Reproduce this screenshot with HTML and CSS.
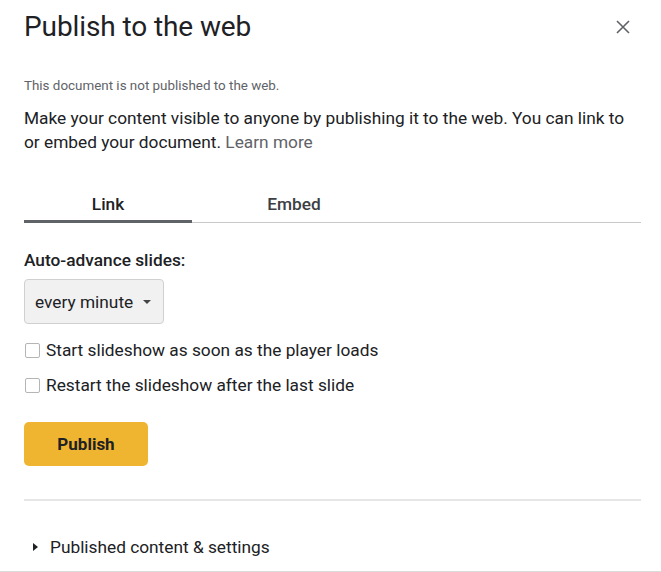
FILE: index.html
```html
<!DOCTYPE html>
<html>
<head>
<meta charset="utf-8">
<link rel="stylesheet" href="styles.css">
</head>
<body>
<div class="dialog">
  <header class="head">
    <h1 class="title">Publish to the web</h1>
    <svg class="close" width="14" height="14" viewBox="0 0 14 14"><path d="M1 1L13 13M13 1L1 13" stroke="#5f6368" stroke-width="1.6" fill="none"/></svg>
  </header>
  <p class="status">This document is not published to the web.</p>
  <p class="desc">Make your content visible to anyone by publishing it to the web. You can link to or embed your document. <span class="learn">Learn more</span></p>
  <nav class="tabs">
    <div class="tab active">Link</div>
    <div class="tab">Embed</div>
  </nav>
  <div class="label">Auto-advance slides:</div>
  <div class="select">every minute <span class="caret"></span></div>
  <label class="check first"><span class="box"></span>Start slideshow as soon as the player loads</label>
  <label class="check"><span class="box"></span>Restart the slideshow after the last slide</label>
  <button class="publish">Publish</button>
  <hr class="sep">
  <div class="expander"><span class="tri"></span>Published content &amp; settings</div>
</div>
<div class="bottom"></div>
</body>
</html>
```
FILE: styles.css
```css
html, body { margin: 0; padding: 0; background: #fff; }
body { font-family: Roboto, "Noto Sans", Arial, sans-serif; color: #202124; height: 572px; position: relative; overflow: hidden; }
.dialog { padding: 0 20px 0 24px; }
.head { display: flex; justify-content: space-between; align-items: center; height: 54px; }
.title { margin: 0; font-size: 28px; font-weight: 400; line-height: 32px; letter-spacing: -0.1px; }
.close { margin-right: 11px; }
.status { margin: 24px 0 0; font-size: 13.4px; line-height: 16px; color: #5f6368; }
.desc { margin: 12px 0 0; font-size: 17.3px; line-height: 24px; color: #202124; }
.learn { color: #5f6368; }
.tabs { display: flex; align-items: flex-start; margin-top: 38px; border-bottom: 1px solid #c8c8c8; height: 30px; }
.tab { font-size: 17.3px; font-weight: 500; line-height: 24px; color: #3c4043; text-align: center; }
.tab:first-child { width: 168px; }
.tab:nth-child(2) { width: 204px; }
.tab.active { color: #202124; height: 31px; box-sizing: border-box; border-bottom: 3px solid #5f6368; }
.label { margin-top: 25px; font-size: 17.3px; font-weight: 500; line-height: 24px; }
.select { margin-top: 7px; width: 140px; height: 45px; box-sizing: border-box; border: 1px solid #d0d0d0; border-radius: 4px; background: #f1f1f1; display: flex; align-items: center; padding-left: 10px; font-size: 17.3px; color: #202124; }
.caret { margin-left: 10px; width: 0; height: 0; border-left: 4px solid transparent; border-right: 4px solid transparent; border-top: 4px solid #444; margin-top: 1px; }
.check { display: flex; align-items: center; font-size: 17.3px; line-height: 24px; margin-left: 1px; }
.check.first { margin-top: 14px; }
.check + .check { margin-top: 11px; }
.box { width: 15px; height: 15px; box-sizing: border-box; border: 1px solid #b5b5b5; border-radius: 2px; margin-right: 6px; }
.publish { display: block; margin-top: 25px; width: 124px; height: 44px; border: none; border-radius: 5px; background: #f0b530; font-family: Roboto, sans-serif; font-weight: 700; font-size: 17px; color: #202124; padding: 0; }
.sep { margin: 33px 0 0; border: none; height: 2px; background: #e6e6e6; }
.expander { margin-top: 34px; display: flex; align-items: center; font-size: 17.3px; line-height: 24px; }
.tri { width: 0; height: 0; border-top: 4px solid transparent; border-bottom: 4px solid transparent; border-left: 5px solid #202124; margin: 0 12px 0 9px; }
.bottom { position: absolute; left: 0; right: 0; bottom: 0; height: 1px; background: #dcdcdc; }
```
